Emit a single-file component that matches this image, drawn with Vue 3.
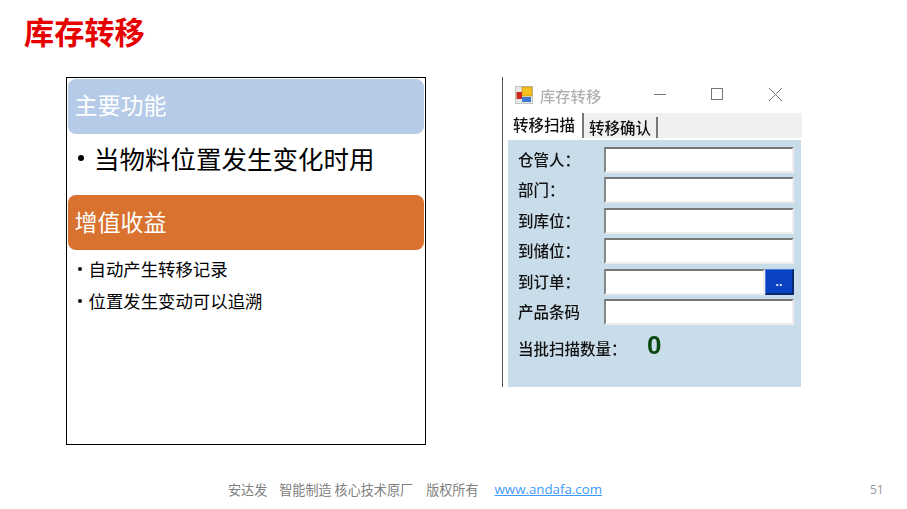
<script setup>
const rows = [
  { label: '仓管人：' },
  { label: '部门：' },
  { label: '到库位：' },
  { label: '到储位：' },
  { label: '到订单：', lookup: true },
  { label: '产品条码' },
]
</script>

<template>
  <div class="slide">
    <h1 class="title">库存转移</h1>
    <main class="main">
      <section class="card">
        <div class="band band-blue">主要功能</div>
        <ul class="big-list"><li>当物料位置发生变化时用</li></ul>
        <div class="band band-orange">增值收益</div>
        <ul class="small-list">
          <li>自动产生转移记录</li>
          <li>位置发生变动可以追溯</li>
        </ul>
      </section>
      <section class="window">
        <div class="titlebar">
          <svg class="app-icon" width="18" height="18" viewBox="0 0 18 18">
            <rect x="0.5" y="0.5" width="17" height="17" fill="#e6e6e6" stroke="#c4c4c4" />
            <rect x="7" y="1" width="10" height="9" fill="#f5c21b" stroke="#b98a10" stroke-width="0.6" />
            <rect x="1.5" y="6" width="5.5" height="7" fill="#cc2a1c" />
            <rect x="7" y="11" width="9" height="5" fill="#3f78cf" />
          </svg>
          <span class="win-title">库存转移</span>
          <svg class="ctl ctl-min" width="14" height="14" viewBox="0 0 14 14"><path d="M1 7.5H13" stroke="#777" fill="none" /></svg>
          <svg class="ctl ctl-max" width="14" height="14" viewBox="0 0 14 14"><rect x="1.5" y="1.5" width="11" height="11" stroke="#777" fill="none" /></svg>
          <svg class="ctl ctl-close" width="15" height="15" viewBox="0 0 15 15"><path d="M1 1L14 14M14 1L1 14" stroke="#777" fill="none" /></svg>
        </div>
        <div class="tabs">
          <span class="tab tab-on">转移扫描</span>
          <span class="tab">转移确认</span>
        </div>
        <div class="panel">
          <div class="form">
            <div v-for="r in rows" :key="r.label" class="row">
              <span class="lbl">{{ r.label }}</span>
              <span class="field"></span>
              <span v-if="r.lookup" class="lookup">..</span>
            </div>
          </div>
          <div class="count">
            <span class="count-lbl">当批扫描数量：</span>
            <span class="count-num">0</span>
          </div>
        </div>
      </section>
    </main>
    <footer class="footer">
      <span class="foot-a">安达发</span>
      <span class="foot-b">智能制造 核心技术原厂</span>
      <span class="foot-c">版权所有</span>
      <a class="foot-link">www.andafa.com</a>
      <span class="page-no">51</span>
    </footer>
  </div>
</template>

<style>
html, body { margin: 0; background: #fff; }
</style>

<style scoped>
.slide {
  width: 907px;
  height: 509px;
  overflow: hidden;
  display: flex;
  flex-direction: column;
  background: #fff;
  font-family: "Noto Sans CJK SC", "Liberation Sans", sans-serif;
}
.title {
  margin: 0;
  height: 77px;
  box-sizing: border-box;
  padding: 9px 0 0 24px;
  font-size: 30.2px;
  line-height: 44px;
  font-weight: 700;
  color: #e60000;
}
.main {
  display: flex;
  align-items: flex-start;
  padding-left: 66px;
  gap: 76px;
  height: 390px;
}
.card {
  width: 360px;
  height: 368px;
  box-sizing: border-box;
  border: 1px solid #000;
  padding: 1px;
}
.band {
  height: 55px;
  border-radius: 8px;
  padding-left: 6.5px;
  color: #fff;
  font-size: 23px;
  line-height: 52px;
}
.band-blue { background: #b5cbe7; line-height: 51px; }
.band-orange { background: #d8722e; }
ul { list-style: none; margin: 0; padding: 0; }
.big-list {
  height: 61px;
  padding: 4px 0 0 10px;
  box-sizing: border-box;
  font-size: 25.5px;
  line-height: 40px;
  color: #000;
}
.big-list li, .small-list li { display: flex; align-items: center; }
.big-list li::before {
  content: "";
  width: 6px;
  height: 6px;
  border-radius: 50%;
  background: #000;
  margin-right: 10px;
}
.small-list {
  padding: 3px 0 0 9.5px;
  font-size: 17.4px;
  line-height: 32px;
  color: #000;
}
.small-list li::before {
  content: "";
  width: 4px;
  height: 4px;
  border-radius: 50%;
  background: #000;
  margin-right: 7px;
}
.window {
  width: 300px;
  height: 310px;
  box-sizing: border-box;
  border-left: 1px solid #555;
  display: flex;
  flex-direction: column;
  background: #fff;
  filter: blur(0.35px);
  color: #111;
}
.titlebar {
  height: 36px;
  display: flex;
  align-items: center;
  padding-left: 12px;
  position: relative;
}
.win-title { margin-left: 7px; font-size: 15.3px; color: #b0b0b0; font-weight: 500; }
.ctl { position: absolute; top: 10px; }
.ctl-min { left: 150px; }
.ctl-max { left: 207px; }
.ctl-close { left: 265px; }
.tabs {
  height: 25px;
  margin-left: 2px;
  background: #f0f0f0;
  display: flex;
  align-items: flex-end;
}
.tab {
  font-size: 15.5px;
  font-weight: 500;
  line-height: 21px;
  height: 21px;
  padding: 0 5px 0 5px;
  border-right: 2px solid #777;
}
.tab-on {
  background: #fff;
  height: 25px;
  line-height: 23px;
  padding: 0 7px 0 8px;
}
.panel {
  flex: 1;
  margin: 2px 1px 0 5px;
  background: #c8dcea;
  padding: 7px 7px 0 10px;
  box-sizing: border-box;
}
.form { display: flex; flex-direction: column; gap: 4.4px; }
.row { display: flex; align-items: center; height: 26px; }
.lbl { width: 86px; flex: none; font-size: 15.5px; font-weight: 500; line-height: 24px; height: 26px; }
.field {
  flex: 1;
  height: 26px;
  box-sizing: border-box;
  background: #fff;
  border: 2px solid #eee;
  border-top-color: #777;
  border-left-color: #888;
}
.lookup {
  width: 29px;
  height: 26px;
  box-sizing: border-box;
  background: #0a42c4;
  border: 1px solid #0a2a70;
  border-right-width: 2px;
  border-bottom-width: 2px;
  border-top-color: #4d7be0;
  border-left-color: #4d7be0;
  color: #eef3ff;
  font-family: "Liberation Sans", sans-serif;
  font-size: 13px;
  font-weight: 700;
  line-height: 24px;
  text-align: center;
}
.count { display: flex; align-items: flex-start; margin-top: 5px; }
.count-lbl { width: 129px; font-size: 15.5px; font-weight: 500; line-height: 37px; white-space: nowrap; }
.count-num {
  font-family: "Liberation Sans", sans-serif;
  font-size: 26px;
  font-weight: 700;
  color: #0a4a10;
  line-height: 31px;
}
.footer {
  flex: 1;
  position: relative;
  display: flex;
  align-items: center;
  padding: 2px 0 0 228px;
  box-sizing: border-box;
  font-size: 13.1px;
  color: #808080;
  height: 42px;
}
.foot-a { margin-right: 12px; }
.foot-b { margin-right: 13px; }
.foot-c { margin-right: 16px; }
.foot-link {
  color: #3f9bff;
  text-decoration: underline;
  font-family: "Open Sans", sans-serif;
  font-size: 13.3px;
}
.page-no {
  position: absolute;
  left: 870px;
  font-size: 12px;
  font-family: "Open Sans", sans-serif;
  color: #999;
}
</style>
